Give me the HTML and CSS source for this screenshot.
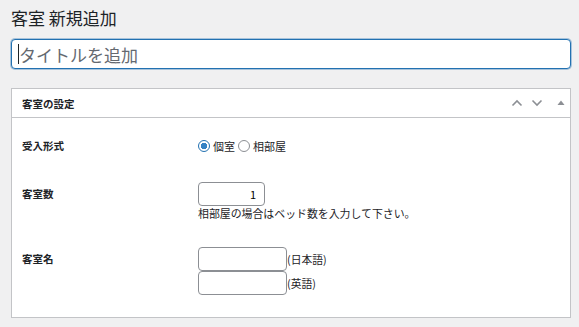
FILE: index.html
```html
<!DOCTYPE html>
<html lang="ja">
<head>
    <meta charset="UTF-8">
    <title>客室 新規追加</title>
    <link rel="stylesheet" href="styles.css">
</head>
<body>
    <div class="wrap">
        <h1 class="page-title">客室 新規追加</h1>

        <div class="title-wrap">
            <input type="text" class="title-input" placeholder="タイトルを追加">
            <span class="caret"></span>
        </div>

        <div class="postbox">
            <div class="postbox-header">
                <h2 class="hndle">客室の設定</h2>
                <div class="handle-actions">
                    <svg width="12" height="8" viewBox="0 0 12 8"><path d="M1.5 6.5 L6 2 L10.5 6.5" fill="none" stroke="#8c8f94" stroke-width="1.6"/></svg>
                    <svg width="12" height="8" viewBox="0 0 12 8"><path d="M1.5 1.5 L6 6 L10.5 1.5" fill="none" stroke="#8c8f94" stroke-width="1.6"/></svg>
                    <svg width="8" height="8" viewBox="0 0 8 8"><path d="M0.5 6 L4 1.5 L7.5 6 Z" fill="#8c8f94"/></svg>
                </div>
            </div>

            <div class="inside">
                <div class="label">受入形式</div>
                <div class="field radios">
                    <label class="radio"><input type="radio" name="type" checked>個室</label>
                    <label class="radio"><input type="radio" name="type">相部屋</label>
                </div>

                <div class="label tall">客室数</div>
                <div class="field">
                    <input type="number" class="num" value="1">
                    <div class="help">相部屋の場合はベッド数を入力して下さい。</div>
                </div>

                <div class="label tall">客室名</div>
                <div class="field">
                    <div class="name-row"><input type="text" class="name"><span>(日本語)</span></div>
                    <div class="name-row"><input type="text" class="name"><span>(英語)</span></div>
                </div>
            </div>
        </div>
    </div>
</body>
</html>
```

FILE: styles.css
```css
*{
    box-sizing: border-box;
}
body{
    margin: 0;
    background-color: #f0f0f1;
    color: #1d2327;
    font-family: "Noto Sans CJK JP", "Noto Sans", sans-serif;
}
.wrap{
    padding: 0 8px 0 11px;
}
.page-title{
    margin: 0;
    padding-top: 6px;
    font-size: 17px;
    font-weight: 400;
    line-height: 24px;
    height: 39px;
}
.title-wrap{
    position: relative;
}
.title-input{
    display: block;
    width: 100%;
    height: 30px;
    padding: 0 6px 0 7px;
    border: 1px solid #2271b1;
    border-radius: 4px;
    box-shadow: 0 0 0 1px rgba(34, 113, 177, 0.35);
    background: #fff;
    font-family: inherit;
    font-size: 17px;
    outline: none;
}
.title-input::placeholder{
    color: #646970;
}
.caret{
    position: absolute;
    left: 7px;
    top: 5px;
    width: 1px;
    height: 20px;
    background: #1d2327;
}
.postbox{
    margin-top: 19px;
    background: #fff;
    border: 1px solid #c3c4c7;
}
.postbox-header{
    display: flex;
    align-items: center;
    justify-content: space-between;
    height: 29px;
    border-bottom: 1px solid #c3c4c7;
    padding: 0 5px 0 10px;
}
.hndle{
    margin: 0;
    font-size: 10.5px;
    font-weight: 700;
}
.handle-actions{
    display: flex;
    align-items: center;
    gap: 8px;
}
.handle-actions svg:last-child{
    margin-left: 6px;
}
.inside{
    display: grid;
    grid-template-columns: 176px 1fr;
    row-gap: 27px;
    padding: 19px 10px 22px 10px;
    align-items: start;
}
.label{
    font-size: 10.5px;
    font-weight: 700;
    line-height: 18px;
}
.label.tall{
    line-height: 24px;
}
.radios{
    display: flex;
    align-items: center;
    height: 18px;
    font-size: 11px;
}
.radio{
    display: flex;
    align-items: center;
    margin-right: 3px;
}
.radio input{
    appearance: none;
    width: 12px;
    height: 12px;
    margin: 0 3px 0 0;
    border: 1px solid #8c8f94;
    border-radius: 50%;
    background: #fff;
}
.radio input:checked{
    border-color: #2271b1;
    background: radial-gradient(circle, #3582c4 0 3px, #fff 3.5px);
}
.num{
    display: block;
    width: 67px;
    height: 24px;
    border: 1px solid #8c8f94;
    border-radius: 4px;
    padding: 0 8px;
    text-align: right;
    font-family: inherit;
    font-size: 11px;
    -moz-appearance: textfield;
}
.num::-webkit-inner-spin-button,
.num::-webkit-outer-spin-button{
    -webkit-appearance: none;
    margin: 0;
}
.help{
    font-size: 10.9px;
    line-height: 14px;
}
.name-row{
    display: flex;
    align-items: center;
    font-size: 10.8px;
}
.name{
    width: 89px;
    height: 24px;
    margin: 0;
    border: 1px solid #8c8f94;
    border-radius: 4px;
    background: #fff;
}
```
